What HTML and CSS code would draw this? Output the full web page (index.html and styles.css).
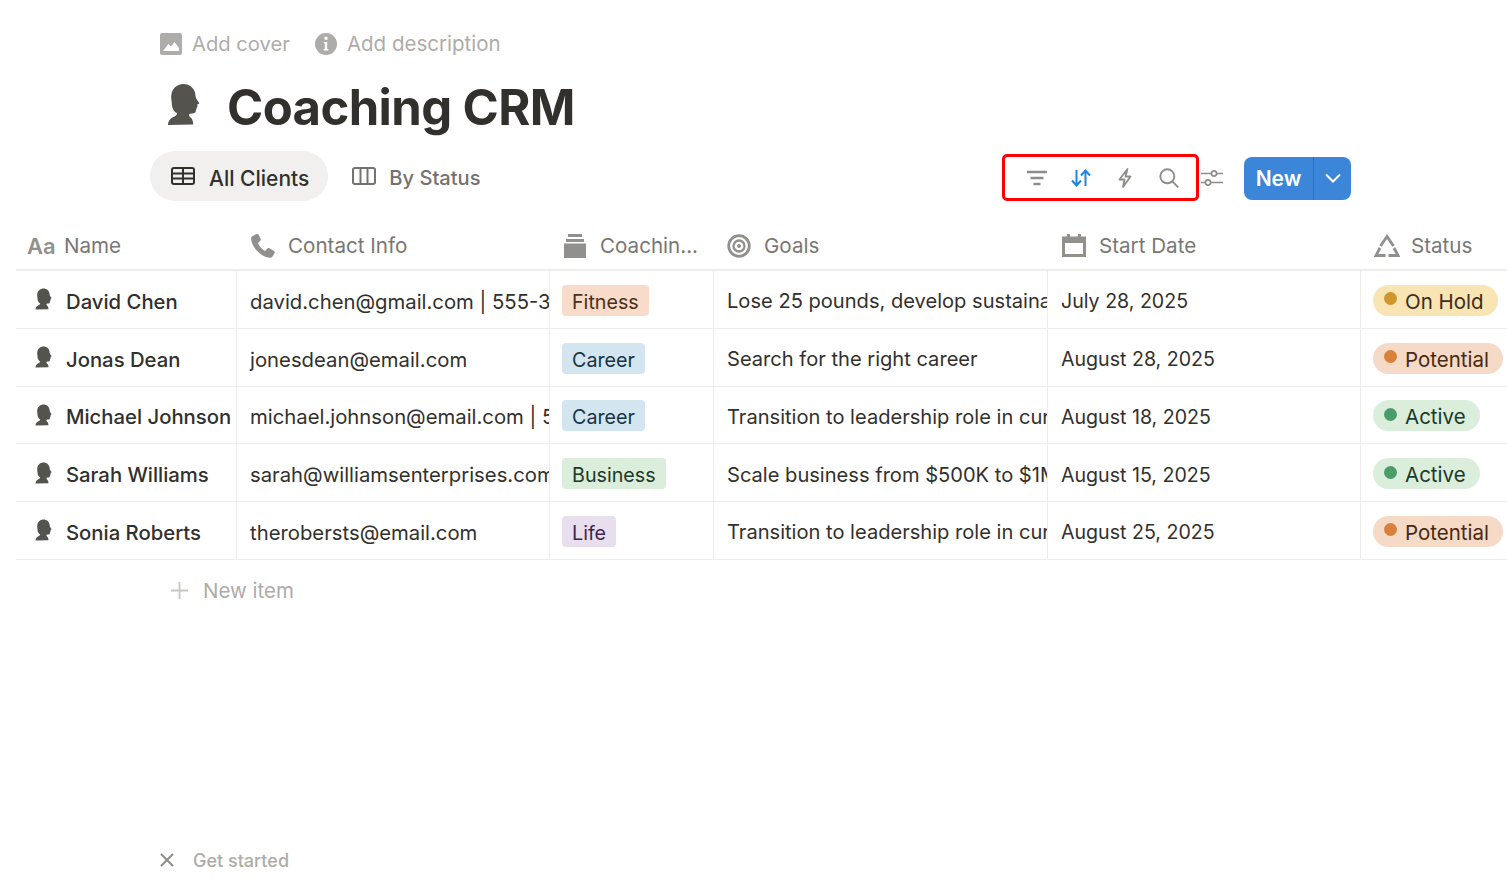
FILE: index.html
```html
<!DOCTYPE html>
<html lang="en">
<head>
<meta charset="utf-8">
<title>Coaching CRM</title>
<link rel="stylesheet" href="styles.css">
</head>
<body>
<svg class="defs" width="0" height="0">
  <symbol id="head" viewBox="0 0 36 44">
    <path d="M3 43c.4-3.800 2-6.300 5-7.800 2.800-1.300 4.300-2.500 4.400-4.200-3.500-1.700-5.400-5.200-5.400-10 0-3-1.200-5.500-.4-9.500C7.700 5.300 12.800 1 19 1c6.500 0 11.500 4.500 12.200 10.500.2 2 .2 3 1 4.500l2.800 4.200c.5 1-.5 1.600-2 1.900.3 1 .7 1.500.3 2.200-.3.600-.8.800-.9 1.300.3.800 0 1.500-.6 1.900.2 2.200-.8 3.700-3 3.700-2 0-3.300.1-3.800.8-.6 1 0 2.300 1.900 3.800 1.300 1 2 3.300 2.100 6.700z"/>
  </symbol>
</svg>
<header class="page-head">
  <div class="meta-row">
    <span class="meta-item meta-cover">
      <svg class="meta-icon" viewBox="0 0 22 22"><path fill-rule="evenodd" d="M2 0h18a2 2 0 0 1 2 2v18a2 2 0 0 1-2 2H2a2 2 0 0 1-2-2V2a2 2 0 0 1 2-2zm1 18h16v-3l-4.500-6-3.500 4.500-2.500-2.500z"/></svg>
      Add cover
    </span>
    <span class="meta-item">
      <svg class="meta-icon" viewBox="0 0 22 22"><path fill-rule="evenodd" d="M11 0a11 11 0 1 1 0 22 11 11 0 0 1 0-22zm0 3.500a1.800 1.800 0 1 0 0 3.600 1.800 1.800 0 0 0 0-3.600zM8.800 9v1.500h1V16H8.600v1.600h4.800V16h-1.200V9z"/></svg>
      Add description
    </span>
  </div>
  <h1 class="title"><svg class="title-icon"><use href="#head"/></svg>Coaching CRM</h1>
  <div class="view-bar">
    <div class="tabs">
      <span class="tab tab-active">
        <svg class="tab-icon" viewBox="0 0 24 18" fill="none" stroke="currentColor" stroke-width="2"><rect x="1" y="1" width="22" height="16" rx="2"/><path d="M1 6.500h22M1 11.500h22M12 1v16"/></svg>
        All Clients
      </span>
      <span class="tab tab-plain">
        <svg class="tab-icon" viewBox="0 0 24 18" fill="none" stroke="currentColor" stroke-width="2"><rect x="1" y="1" width="22" height="16" rx="2"/><path d="M8.500 1v16M15.500 1v16"/></svg>
        By Status
      </span>
    </div>
    <div class="actions">
      <div class="tool-box">
        <svg class="tool" viewBox="0 0 20 16" fill="none" stroke="#8e8d89" stroke-width="2.300"><path d="M0 2h20M3.500 8h13M6.500 14h7"/></svg>
        <svg class="tool" viewBox="0 0 20 20" fill="none" stroke="#2383e2" stroke-width="2"><path d="M5.500 2v15M1 12.500 5.500 17.500 10 12.500M14.500 18V3M10 7.500 14.500 2.500 19 7.500"/></svg>
        <svg class="tool" viewBox="0 0 20 20" fill="none" stroke="#8e8d89" stroke-width="1.800"><path d="M12.500 1 4.500 11.500h5L8 19l7.500-10.500h-5z" stroke-linejoin="round"/></svg>
        <svg class="tool" viewBox="0 0 20 20" fill="none" stroke="#8e8d89" stroke-width="1.900"><circle cx="8.300" cy="8.300" r="7"/><path d="m13.300 13.300 6 6"/></svg>
      </div>
      <svg class="slider" viewBox="0 0 22 18" fill="none" stroke="#8e8d89" stroke-width="1.700"><path d="M0 4.500h10M16 4.500h6M0 13.500h4M10 13.500h12"/><circle cx="13" cy="4.500" r="2.600"/><circle cx="7" cy="13.500" r="2.600"/></svg>
      <div class="new-btn">
        <span class="new-label">New</span>
        <span class="new-caret"><svg viewBox="0 0 16 10" fill="none" stroke="#fff" stroke-width="2"><path d="m1 1.500 7 7 7-7"/></svg></span>
      </div>
    </div>
  </div>
</header>

<main class="table">
  <div class="row row-head">
    <div class="cell cell-title"><span class="aa">A<i>a</i></span>Name</div>
    <div class="cell cell-contact"><svg class="col-icon" viewBox="0 0 24 24"><path d="M5.500 0 .8 2.500C0 3.300 0 5 .4 7c1.300 6.500 9 15 16.600 16.600 2 .3 3.800-.2 4.600-1.200l2-3.400c.5-1-.1-1.700-1-2.300l-4-2.400c-1-.5-1.800-.3-2.500.5l-1.400 1.700c-.4.400-1 .4-1.500.1-2.500-1.600-4.900-4.300-6-7-.2-.5 0-1 .4-1.300l1.500-1.200c.8-.7 1-1.500.6-2.400L7.800 1.100C7.300 0 6.500-.3 5.500 0z"/></svg>Contact Info</div>
    <div class="cell"><svg class="col-icon" viewBox="0 0 22 24"><path d="M4 0h14v3H4zM2 5h18v3H2zM0 9.500h22V24H0z"/></svg><span class="clip">Coachin...</span></div>
    <div class="cell"><svg class="col-icon col-icon-line" viewBox="0 0 24 24"><circle cx="12" cy="12" r="10.300" stroke-width="2.800"/><circle cx="12" cy="12" r="5.500" stroke-width="2.300"/><circle class="bull" cx="12" cy="12" r="2"/></svg>Goals</div>
    <div class="cell cell-start"><svg class="col-icon" viewBox="0 0 24 24"><path fill-rule="evenodd" d="M5 0h3v2.500h8V0h3v2.500h5V23H0V2.500h5zM3 9v11h18V9z"/></svg>Start Date</div>
    <div class="cell"><svg class="col-icon col-icon-wide col-icon-line" viewBox="0 0 26 24"><path stroke-width="2.800" d="M6.500 12 13 2.500 19.500 12"/><path stroke-width="2.800" d="M6 14 2 21.500h9.500M14.500 21.500H24L20 14"/></svg>Status</div>
  </div>

  <div class="row">
    <div class="cell cell-name"><svg class="row-icon"><use href="#head"/></svg>David Chen</div>
    <div class="cell">david.chen@gmail.com | 555-345-1234</div>
    <div class="cell"><span class="tag tag-orange">Fitness</span></div>
    <div class="cell cell-goal">Lose 25 pounds, develop sustainable habits for life</div>
    <div class="cell cell-date">July 28, 2025</div>
    <div class="cell"><span class="pill pill-yellow"><i class="dot"></i>On Hold</span></div>
  </div>
  <div class="row">
    <div class="cell cell-name"><svg class="row-icon"><use href="#head"/></svg>Jonas Dean</div>
    <div class="cell">jonesdean@email.com</div>
    <div class="cell"><span class="tag tag-blue">Career</span></div>
    <div class="cell cell-goal">Search for the right career</div>
    <div class="cell cell-date">August 28, 2025</div>
    <div class="cell"><span class="pill pill-orange"><i class="dot"></i>Potential</span></div>
  </div>
  <div class="row">
    <div class="cell cell-name"><svg class="row-icon"><use href="#head"/></svg>Michael Johnson</div>
    <div class="cell">michael.johnson@email.com | 555-123-4567</div>
    <div class="cell"><span class="tag tag-blue">Career</span></div>
    <div class="cell cell-goal">Transition to leadership role in current company</div>
    <div class="cell cell-date">August 18, 2025</div>
    <div class="cell"><span class="pill pill-green"><i class="dot"></i>Active</span></div>
  </div>
  <div class="row">
    <div class="cell cell-name"><svg class="row-icon"><use href="#head"/></svg>Sarah Williams</div>
    <div class="cell">sarah@williamsenterprises.com</div>
    <div class="cell"><span class="tag tag-green">Business</span></div>
    <div class="cell cell-goal">Scale business from $500K to $1M in revenue</div>
    <div class="cell cell-date">August 15, 2025</div>
    <div class="cell"><span class="pill pill-green"><i class="dot"></i>Active</span></div>
  </div>
  <div class="row">
    <div class="cell cell-name"><svg class="row-icon"><use href="#head"/></svg>Sonia Roberts</div>
    <div class="cell">therobersts@email.com</div>
    <div class="cell"><span class="tag tag-purple">Life</span></div>
    <div class="cell cell-goal">Transition to leadership role in current company</div>
    <div class="cell cell-date">August 25, 2025</div>
    <div class="cell"><span class="pill pill-orange"><i class="dot"></i>Potential</span></div>
  </div>
  <div class="new-item">
    <svg class="plus" viewBox="0 0 16 16" stroke="#c7c6c3" stroke-width="1.700"><path d="M8 0v16M0 8h16"/></svg>
    New item
  </div>
</main>

<footer class="get-started">
  <svg class="close" viewBox="0 0 14 14" stroke="#8e8d89" stroke-width="2"><path d="m1 1 12 12M13 1 1 13"/></svg>
  <span>Get started</span>
</footer>
</body>
</html>
```
FILE: styles.css
```css
* { box-sizing: border-box; }
html, body { height: 100%; }
body {
  margin: 0;
  height: 888px;
  overflow: hidden;
  background: #fff;
  color: #32302c;
  font-family: Inter, "Noto Sans", sans-serif;
  font-size: 20px;
  display: flex;
  flex-direction: column;
}
.defs { display: block; height: 0; }
.page-head { padding: 30px 156px 0 150px; }
.meta-row { display: flex; gap: 25px; padding-left: 10px; height: 27px; align-items: center; }
.meta-item { display: flex; align-items: center; gap: 10px; color: #aeaca8; font-size: 20.500px; }
.meta-cover { font-size: 20.200px; }
.meta-icon { width: 22px; height: 22px; fill: #aeaca8; }
.title {
  display: flex;
  align-items: center;
  margin: 20px 0 0;
  padding-left: 15px;
  height: 60px;
  font-size: 49px;
  font-weight: 700;
  letter-spacing: -.6px;
  color: #32302c;
}
.title-icon { width: 35px; height: 43px; fill: #55534e; margin: -6px 27px 0 0; }
.view-bar { display: flex; justify-content: space-between; align-items: center; margin-top: 14px; height: 50px; }
.tabs { display: flex; gap: 3px; }
.tab { display: flex; align-items: center; gap: 14px; height: 50px; padding: 4px 19px 0 21px; border-radius: 25px; font-size: 21px; font-weight: 500; color: #73726e; }
.tab-active { background: #f1f0ee; color: #32302c; }
.tab-plain { font-size: 20.100px; gap: 13px; }
.tab-icon { width: 24px; height: 18px; margin-top: -4px; }
.actions { display: flex; align-items: center; }
.tool-box {
  display: flex;
  align-items: center;
  gap: 24px;
  width: 197px;
  height: 47px;
  margin-top: 2px;
  padding: 2px 20px 0 22px;
  border: 3px solid #f00;
  border-radius: 5px;
}
.tool { width: 20px; height: 20px; flex: none; }
.slider { width: 22px; height: 18px; margin: 3px 21px 0 2px; }
.new-btn { display: flex; width: 107px; height: 43px; margin-top: 4px; border-radius: 8px; background: #3b86d8; color: #fff; font-weight: 600; font-size: 21px; overflow: hidden; }
.new-label { width: 70px; border-right: 1px solid #2f73bd; display: flex; align-items: center; justify-content: center; }
.new-caret { flex: 1; display: flex; align-items: center; justify-content: center; }
.new-caret svg { width: 16px; height: 10px; }

.table { margin: 21px 0 0 16px; }
.row {
  display: grid;
  grid-template-columns: 220px 313px 164px 334px 313px 147px;
  height: 57.750px;
  border-bottom: 1px solid #ededec;
  font-size: 20.300px;
}
.row-head { height: 49px; border-bottom: 2px solid #ededec; color: #787774; font-size: 20.600px; }
.cell { display: flex; align-items: center; padding: 4px 0 0 13px; overflow: hidden; white-space: nowrap; border-left: 1px solid #ededec; min-width: 0; }
.row-head .cell { border-left: 1px solid transparent; gap: 13px; padding-top: 0; }
.row-head .cell-title { gap: 11px; }
.row-head .cell-contact { padding-left: 14px; gap: 13px; }
.row-head .cell-start { padding-left: 14px; gap: 13px; }
.cell:first-child { border-left: 0; padding-left: 11px; }
.cell-name { font-weight: 500; gap: 14px; }
.row .cell.cell-name { padding-left: 18px; }
.cell-goal { font-size: 20.100px; }
.cell-date { font-size: 19.600px; }
.aa { width: 26px; font-size: 22px; font-weight: 600; color: #91908c; }
.aa i { font-style: normal; }
.col-icon { width: 24px; height: 24px; fill: #91908c; flex: none; }
.col-icon-line { fill: none; stroke: #91908c; }
.bull { fill: #91908c; stroke: none; }
.col-icon-wide { width: 26px; margin-right: -2px; }
.row-icon { width: 18px; height: 22px; fill: #55534e; flex: none; margin-top: -4px; }
.tag, .pill { display: inline-flex; align-items: center; height: 31px; padding: 3px 10px 0; margin: -2px 0 0 -1px; }
.tag { border-radius: 4px; font-size: 19.700px; }
.pill { border-radius: 16px; padding: 2px 14px 0 11px; gap: 8px; font-size: 20.500px; }
.dot { width: 13px; height: 13px; border-radius: 50%; margin-top: -5px; }
.tag-orange { background: #f8dcc9; color: #4c2f1a; }
.tag-blue { background: #d3e5ef; color: #183347; }
.tag-green { background: #dbeddb; color: #1c3829; }
.tag-purple { background: #e8deee; color: #412454; }
.pill-yellow { background: #f9e5b4; color: #402c1b; }
.pill-yellow .dot { background: #cf952f; }
.pill-orange { background: #f6dac8; color: #49290e; }
.pill-orange .dot { background: #d9813c; }
.pill-green { background: #dbeddb; color: #1c3829; }
.pill-green .dot { background: #4c9c6b; }
.new-item { display: flex; align-items: center; gap: 15px; height: 62px; padding-left: 155px; color: #aeaca8; font-size: 20.500px; }
.plus { width: 17px; height: 17px; }
.get-started { margin-top: auto; display: flex; align-items: center; gap: 19px; height: 56px; padding: 0 0 0 160px; color: #aeaca8; font-size: 18px; font-weight: 500; }
.close { width: 14px; height: 14px; }
```
